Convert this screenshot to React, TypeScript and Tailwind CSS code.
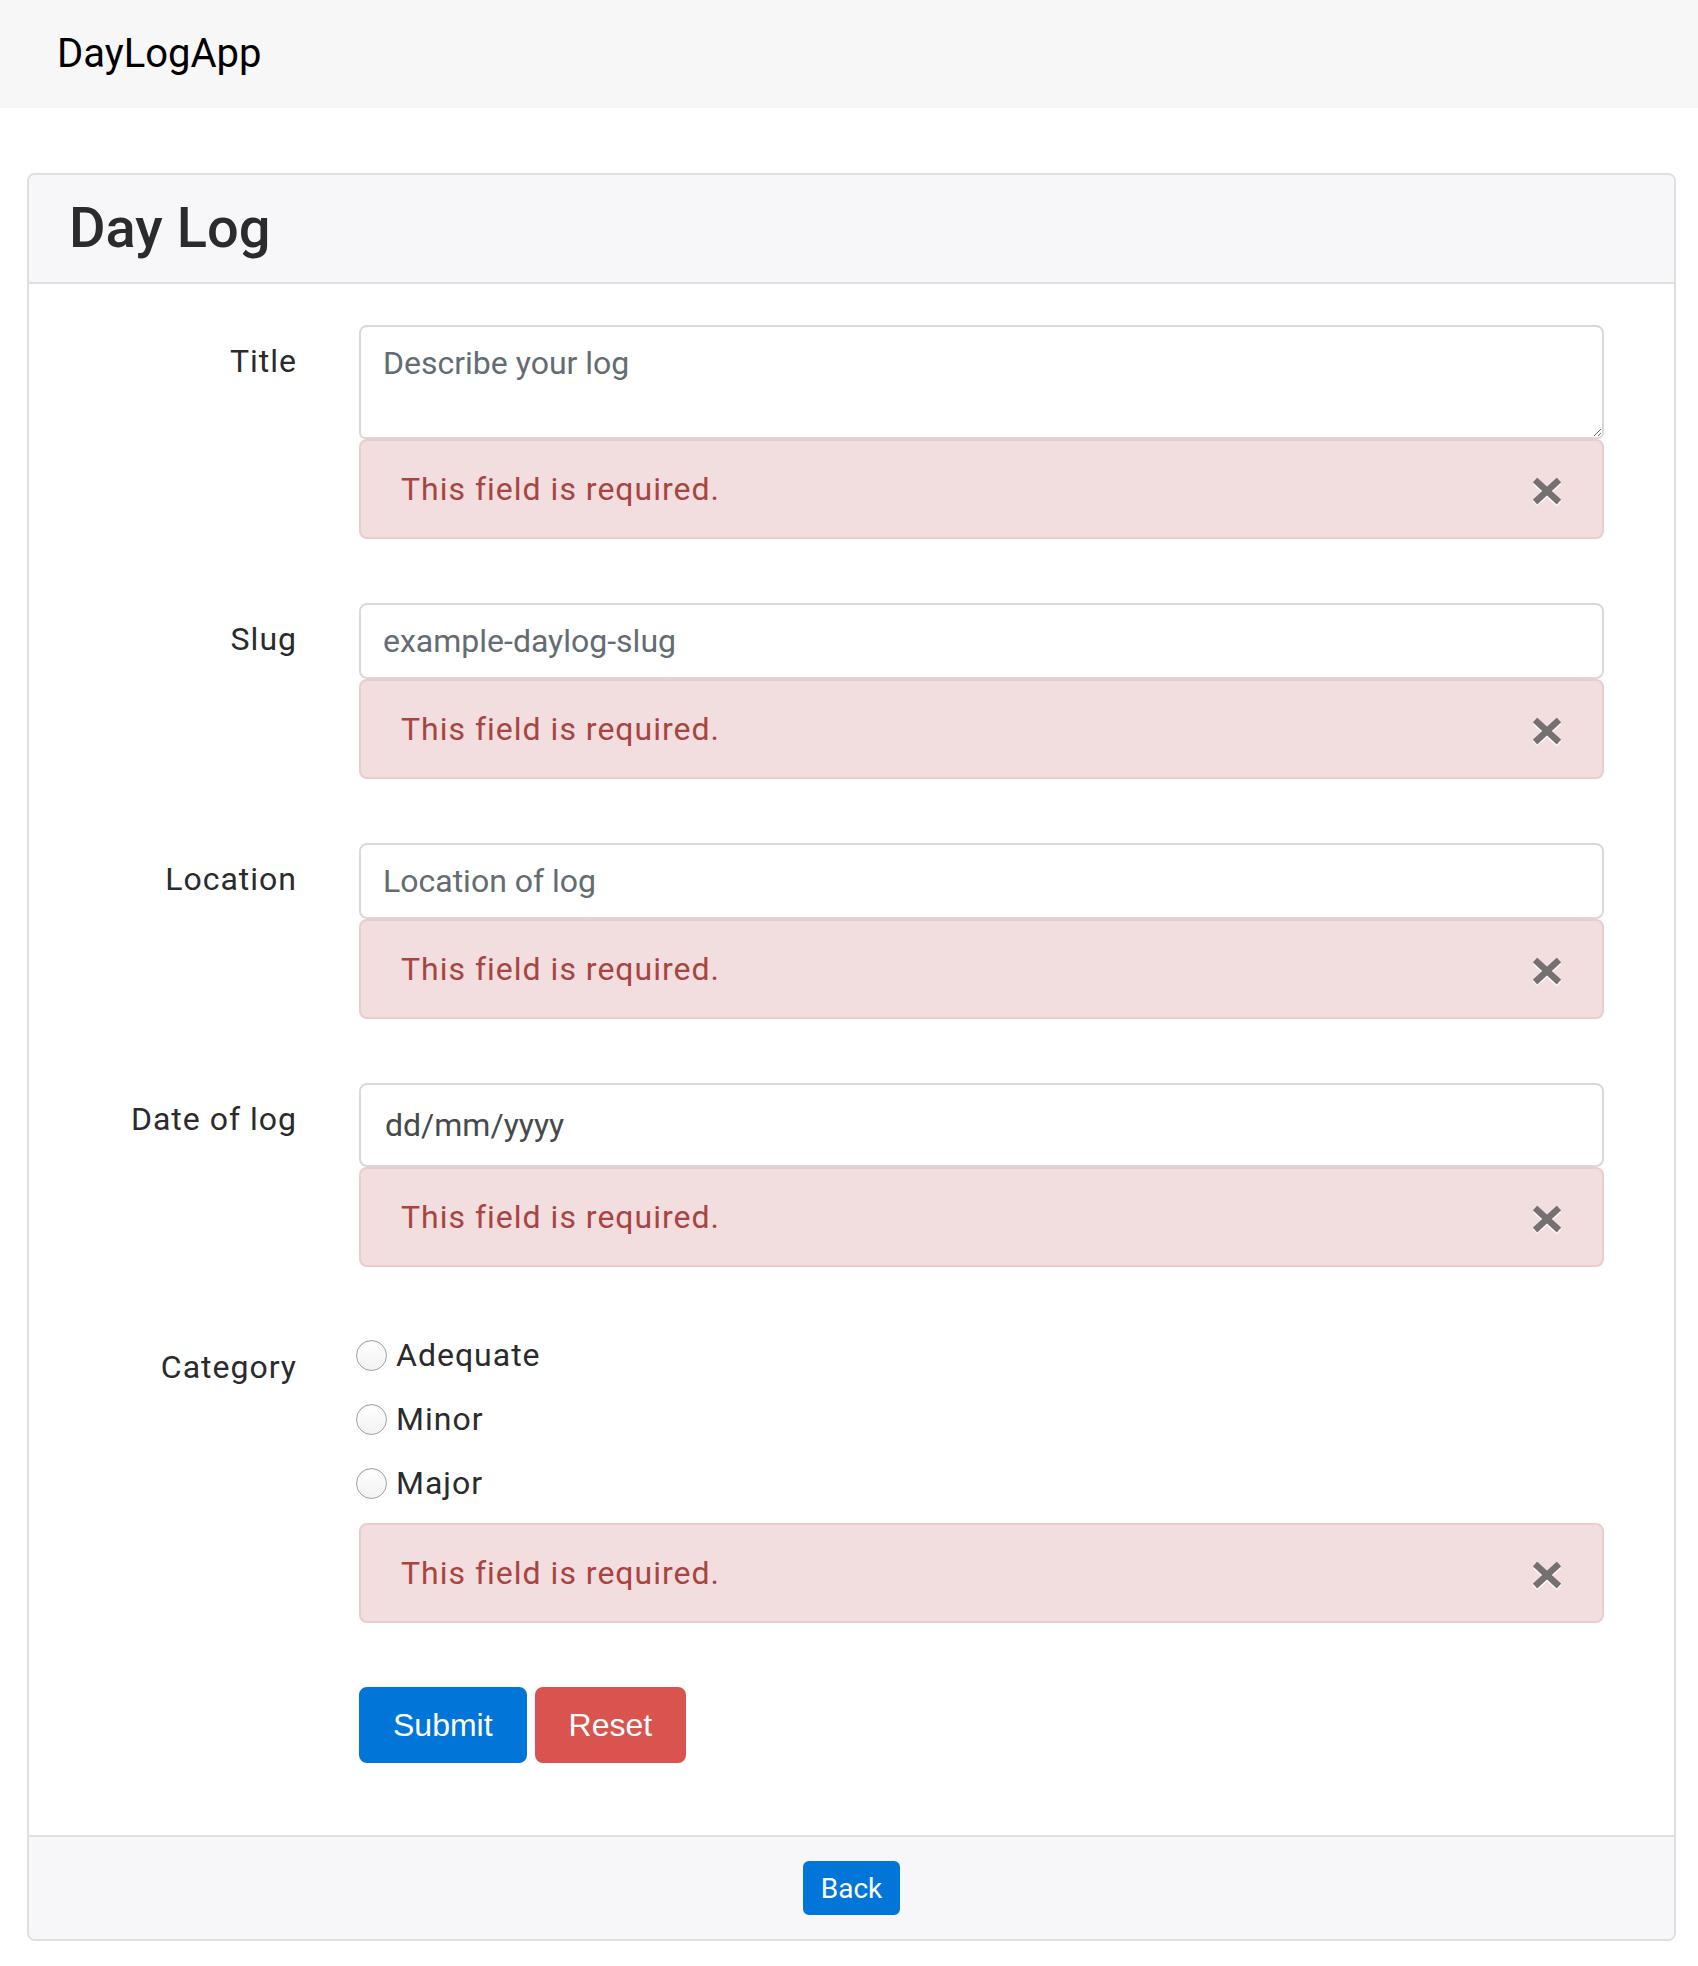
import type { ReactNode } from 'react';

const labelCls =
    "w-[290px] shrink-0 pr-[62px] pt-[16px] text-right text-[32px] leading-[40px] tracking-[1px] text-[#292b2c]";

function CloseX() {
    // bold "×" of the dismiss button, with bootstrap's white text-shadow
    return (
        <svg width="28" height="28" viewBox="0 0 28 28" className="mt-[6px] shrink-0">
            <g stroke="#ffffff" strokeWidth="6.5" strokeLinecap="butt" opacity="0.9">
                <line x1="2" y1="4" x2="26" y2="26" />
                <line x1="26" y1="4" x2="2" y2="26" />
            </g>
            <g stroke="#767070" strokeWidth="6.5" strokeLinecap="butt">
                <line x1="2" y1="2" x2="26" y2="24" />
                <line x1="26" y1="2" x2="2" y2="24" />
            </g>
        </svg>
    );
}

function ErrorAlert() {
    return (
        <div className="flex items-center justify-between h-[100px] mb-[32px] pl-[40px] pr-[41px] bg-[#f2dede] border-2 border-[#ebcccc] rounded-[8px] text-[#a94442] text-[32px] leading-[48px] tracking-[1px]">
            <span>This field is required.</span>
            <CloseX />
        </div>
    );
}

function FormRow({ label, children }: { label: string; children: ReactNode }) {
    return (
        <div className="flex mb-[32px]">
            <label className={labelCls}>{label}</label>
            <div className="flex-1 pr-[30px]">{children}</div>
        </div>
    );
}

const inputCls =
    "block w-full h-[76px] px-[22px] bg-white border-2 border-[#d9d9d9] rounded-[8px] text-[32px] leading-[40px] text-[#464a4c] placeholder:text-[#636c72] outline-none";

function Radio({ label }: { label: string }) {
    return (
        <div className="flex items-center h-[48px] mb-[16px] -ml-[3px]">
            <span className="w-[31px] h-[31px] rounded-full border border-[#a0a0a0] bg-gradient-to-b from-white to-[#f2f2f2] shadow-[inset_0_1px_1px_rgba(0,0,0,0.08)]" />
            <span className="ml-[9px] text-[32px] leading-[48px] tracking-[1px] text-[#292b2c]">{label}</span>
        </div>
    );
}

export default function App() {
    return (
        <div className="min-h-screen bg-white font-['Roboto','Liberation_Sans',Arial,sans-serif] text-[#292b2c]">
            <nav className="h-[108px] flex items-center pl-[57px] bg-[#f7f7f7]">
                <span className="text-[40px] leading-[48px] text-black">DayLogApp</span>
            </nav>

            <div className="mt-[65px] ml-[27px] mr-[22px] mb-[24px] border-2 border-[#dfdfdf] rounded-[8px] overflow-hidden">
                <div className="px-[40px] pt-[24px] pb-[24px] bg-[#f7f7f9] border-b-2 border-[#dfdfdf]">
                    <h3 className="text-[56px] leading-[59px] font-medium text-[#292b2c]">Day Log</h3>
                </div>

                <div className="pt-[41px] pb-[40px] pl-[40px] pr-[40px] bg-white">
                    <FormRow label="Title">
                        <textarea
                            rows={2}
                            placeholder="Describe your log"
                            className="block w-full h-[114px] px-[22px] py-[16px] bg-white border-2 border-[#d9d9d9] rounded-t-[8px] rounded-b-[6px] text-[32px] leading-[40px] text-[#464a4c] placeholder:text-[#636c72] outline-none resize-y"
                        />
                        <ErrorAlert />
                    </FormRow>

                    <FormRow label="Slug">
                        <input type="text" placeholder="example-daylog-slug" className={inputCls} />
                        <ErrorAlert />
                    </FormRow>

                    <FormRow label="Location">
                        <input type="text" placeholder="Location of log" className={inputCls} />
                        <ErrorAlert />
                    </FormRow>

                    <FormRow label="Date of log">
                        <div className="flex items-center h-[84px] px-[24px] bg-white border-2 border-[#d9d9d9] rounded-[8px] text-[32px] leading-[40px] text-[#464a4c]">
                            dd/mm/yyyy
                        </div>
                        <ErrorAlert />
                    </FormRow>

                    <FormRow label="Category">
                        <div>
                            <Radio label="Adequate" />
                            <Radio label="Minor" />
                            <Radio label="Major" />
                        </div>
                        <ErrorAlert />
                    </FormRow>

                    <div className="flex mb-[32px]">
                        <div className="w-[290px] shrink-0" />
                        <div className="flex gap-[8px] font-['Liberation_Sans',Arial,sans-serif]">
                            <button className="h-[76px] px-[32px] bg-[#0275d8] border-2 border-[#0275d8] rounded-[8px] text-white text-[32px] leading-[40px]">
                                Submit
                            </button>
                            <button className="h-[76px] px-[32px] bg-[#d9534f] border-2 border-[#d9534f] rounded-[8px] text-white text-[32px] leading-[40px]">
                                Reset
                            </button>
                        </div>
                    </div>
                </div>

                <div className="flex justify-center py-[24px] bg-[#f7f7f9] border-t-2 border-[#dfdfdf]">
                    <button className="h-[54px] px-[16px] bg-[#0275d8] border-2 border-[#0275d8] rounded-[6px] text-white text-[28px] leading-[35px]">
                        Back
                    </button>
                </div>
            </div>
        </div>
    );
}
